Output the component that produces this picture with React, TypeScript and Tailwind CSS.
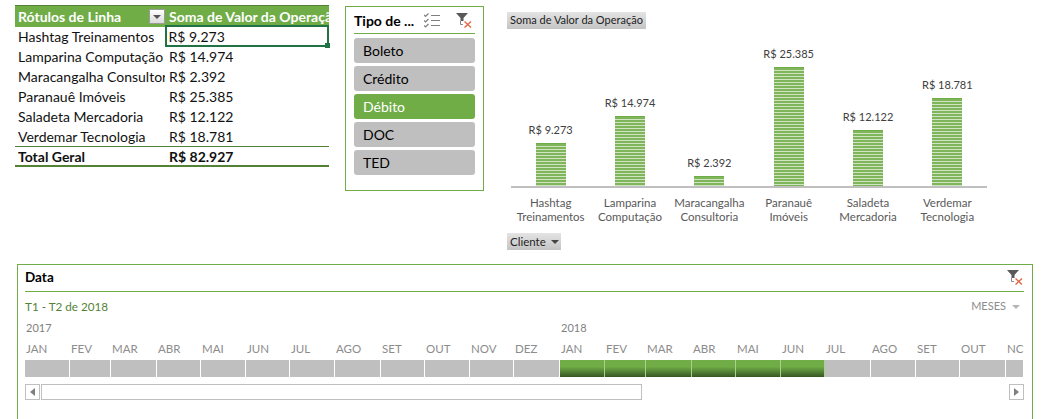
const rows = [
  ["Hashtag Treinamentos", "R$ 9.273"],
  ["Lamparina Computação", "R$ 14.974"],
  ["Maracangalha Consultoria", "R$ 2.392"],
  ["Paranauê Imóveis", "R$ 25.385"],
  ["Saladeta Mercadoria", "R$ 12.122"],
  ["Verdemar Tecnologia", "R$ 18.781"],
]

const slicerItems = ["Boleto", "Crédito", "Débito", "DOC", "TED"]

const bars = [
  { label: ["Hashtag", "Treinamentos"], value: "R$ 9.273", height: 43 },
  { label: ["Lamparina", "Computação"], value: "R$ 14.974", height: 70 },
  { label: ["Maracangalha", "Consultoria"], value: "R$ 2.392", height: 10 },
  { label: ["Paranauê", "Imóveis"], value: "R$ 25.385", height: 119 },
  { label: ["Saladeta", "Mercadoria"], value: "R$ 12.122", height: 56 },
  { label: ["Verdemar", "Tecnologia"], value: "R$ 18.781", height: 88 },
]

// pitch of each month cell, taken from the separators in the picture
const months = [
  ["JAN", 45], ["FEV", 41], ["MAR", 46], ["ABR", 44], ["MAI", 45], ["JUN", 44], ["JUL", 45],
  ["AGO", 46], ["SET", 44], ["OUT", 45], ["NOV", 44], ["DEZ", 46],
  ["JAN", 45], ["FEV", 41], ["MAR", 46], ["ABR", 44], ["MAI", 45], ["JUN", 44], ["JUL", 46],
  ["AGO", 45], ["SET", 44], ["OUT", 46], ["NC", 18],
] as const

function ClearFilterIcon() {
  return (
    <svg width="16" height="15" viewBox="0 0 16 15">
      <path d="M0 0h12L7.500 5V8H4.500V5z" fill="#595959" />
      <path d="M4.500 8v3.500h2.500" fill="none" stroke="#8a8a8a" />
      <path d="M8.500 8.500l6.500 6M15 8.500l-6.500 6" stroke="#e2694a" strokeWidth="1.400" />
    </svg>
  )
}

function MultiSelectIcon() {
  return (
    <svg width="16" height="15" viewBox="0 0 16 15" fill="none">
      <path d="M0 2l1.500 1.500L4.500 .5M0 7.500L1.500 9l3-3M0 12.500L1.500 14l3-3" stroke="#7f7f7f" strokeWidth="1.200" />
      <path d="M7 2.500h9M7 7.500h9M7 12.500h9" stroke="#7f7f7f" />
    </svg>
  )
}

function PivotTable() {
  return (
    <div className="mt-[5px] ml-[15px] w-[314px] text-[14px] text-[#111]">
      <div className="flex h-[22px] items-center border-t border-[#548235] bg-[#70ad47] font-bold text-white">
        <div className="flex w-[150px] items-center justify-between pl-[3px]">
          Rótulos de Linha
          <span className="flex h-[15px] w-[16px] items-center justify-center border border-[#9a9a9a] bg-gradient-to-b from-white to-[#dcdcdc]">
            <span className="h-0 w-0 border-x-[4px] border-t-[4px] border-x-transparent border-t-[#555]" />
          </span>
        </div>
        <div className="w-[164px] overflow-hidden pl-[4px] whitespace-nowrap">Soma de Valor da Operação</div>
      </div>
      <div className="-mt-px">
        {rows.map((row, i) => (
          <div key={row[0]} className="flex h-[20px] items-center">
            <div className="w-[150px] overflow-hidden pl-[3px] whitespace-nowrap">{row[0]}</div>
            <div
              className={
                i === 0
                  ? "relative -my-px flex h-[22px] w-[165px] items-center border-2 border-[#217346] bg-white pl-[2px]"
                  : "w-[164px] pl-[4px]"
              }
            >
              {row[1]}
              {i === 0 && <span className="absolute -right-[3px] -bottom-[3px] h-[5px] w-[5px] bg-[#217346]" />}
            </div>
          </div>
        ))}
      </div>
      <div className="flex h-[21px] items-center border-t border-b-2 border-t-[#548235] border-b-[#548235] pt-px font-bold">
        <div className="w-[150px] pl-[3px]">Total Geral</div>
        <div className="pl-[4px]">R$ 82.927</div>
      </div>
    </div>
  )
}

function Slicer() {
  return (
    <div className="mt-[6px] ml-[16px] h-[185px] w-[139px] border border-[#70ad47] px-[8px]">
      <div className="flex h-[27px] items-center justify-between border-b border-[#70ad47] pr-[3px]">
        <span className="text-[14px] font-bold text-black">Tipo de ...</span>
        <span className="flex items-center gap-[16px]">
          <MultiSelectIcon />
          <ClearFilterIcon />
        </span>
      </div>
      <div className="mt-[4px] flex flex-col gap-[3px]">
        {slicerItems.map((item) => (
          <div
            key={item}
            className={
              item === "Débito"
                ? "flex h-[25px] items-center rounded-[3px] bg-[#70ad47] pl-[9px] text-[14px] text-white"
                : "flex h-[25px] items-center rounded-[3px] bg-[#bfbfbf] pl-[9px] text-[14px] text-black"
            }
          >
            {item}
          </div>
        ))}
      </div>
    </div>
  )
}

function Chart() {
  return (
    <div className="mt-[12px] ml-[23px] w-[490px]">
      <div className="flex h-[17px] w-[139px] items-center bg-gradient-to-b from-[#e4e4e4] to-[#c4c4c4] pl-[3px] text-[11px] whitespace-nowrap text-[#222]">
        Soma de Valor da Operação
      </div>
      <div className="mt-[15px] ml-[4px] grid h-[144px] w-[476px] grid-cols-6 items-end border-b-2 border-[#bfbfbf]">
        {bars.map((bar) => (
          <div key={bar.value} className="flex flex-col items-center">
            <div className="mb-[6px] text-[11px] leading-[14px] whitespace-nowrap text-[#404040]">{bar.value}</div>
            <div
              className="w-[30px] border-t border-[#70ad47] bg-[repeating-linear-gradient(to_bottom,#7fb55b_0px,#7fb55b_2px,#d0e4c2_2px,#d0e4c2_3px)]"
              style={{ height: bar.height }}
            />
          </div>
        ))}
      </div>
      <div className="mt-[8px] ml-[4px] grid w-[476px] grid-cols-6">
        {bars.map((bar) => (
          <div key={bar.value} className="text-center text-[11.500px] leading-[13.500px] text-[#595959]">
            {bar.label[0]}
            <br />
            {bar.label[1]}
          </div>
        ))}
      </div>
      <div className="mt-[10px] flex h-[17px] w-[54px] items-center gap-[5px] bg-gradient-to-b from-[#e4e4e4] to-[#c4c4c4] pl-[3px] text-[11.500px] text-[#222]">
        Cliente
        <span className="h-0 w-0 border-x-[4px] border-t-[4px] border-x-transparent border-t-[#444]" />
      </div>
    </div>
  )
}

function Timeline() {
  return (
    <div className="mt-[14px] ml-[17px] h-[160px] w-[1016px] border border-[#70ad47] pr-[8px] pl-[7px]">
      <div className="flex h-[27px] items-center justify-between border-b border-[#70ad47] pr-px pb-[2px]">
        <span className="text-[13.500px] font-bold text-black">Data</span>
        <ClearFilterIcon />
      </div>
      <div className="flex h-[27px] items-center justify-between pt-[2px]">
        <span className="text-[11.700px] text-[#548235]">T1 - T2 de 2018</span>
        <span className="flex items-center gap-[6px] pr-[4px] text-[11px] text-[#8c8c8c]">
          MESES
          <span className="h-0 w-0 border-x-[4px] border-t-[4px] border-x-transparent border-t-[#b5b5b5]" />
        </span>
      </div>
      <div className="mt-px flex h-[16px] items-center text-[11px] text-[#7f7f7f]">
        <span className="w-[536px] pl-[1px]">2017</span>
        <span>2018</span>
      </div>
      <div className="mt-[3px] flex w-[999px] overflow-hidden">
        {months.map(([name, width], i) => (
          <div key={i} className="shrink-0 overflow-hidden pl-[1px]" style={{ width }}>
            <div className="h-[20px] text-[11.500px] leading-[20px] text-[#8c8c8c]">{name}</div>
          </div>
        ))}
      </div>
      <div className="mt-[1px] flex h-[17px] w-[999px] overflow-hidden">
        {months.map(([name, width], i) => (
          <div
            key={i}
            className={
              i >= 12 && i <= 17
                ? "shrink-0 border-r border-[#a9d18e] bg-gradient-to-b from-[#70ad47] from-40% to-[#375623]"
                : "shrink-0 border-r border-white bg-[#bfbfbf]"
            }
            style={{ width }}
            title={name}
          />
        ))}
      </div>
      <div className="mt-[7px] flex h-[16px] w-[999px] items-stretch gap-px">
        <div className="flex w-[15px] items-center justify-center border border-[#bfbfbf]">
          <span className="h-0 w-0 border-y-[4px] border-r-[5px] border-y-transparent border-r-[#7f7f7f]" />
        </div>
        <div className="w-[601px] border border-[#bfbfbf]" />
        <div className="ml-auto flex w-[15px] items-center justify-center border border-[#bfbfbf]">
          <span className="h-0 w-0 border-y-[4px] border-l-[5px] border-y-transparent border-l-[#7f7f7f]" />
        </div>
      </div>
    </div>
  )
}

export default function App() {
  return (
    <div className="h-[419px] w-[1060px] overflow-hidden bg-white font-['Lato',sans-serif]">
      <div className="flex h-[250px]">
        <PivotTable />
        <Slicer />
        <Chart />
      </div>
      <Timeline />
    </div>
  )
}
